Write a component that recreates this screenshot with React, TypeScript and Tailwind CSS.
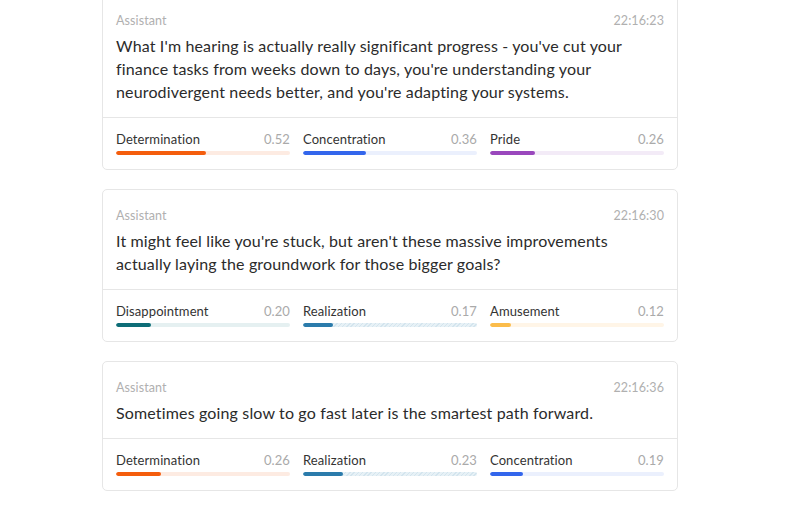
import React from "react";

type Emo = { name: string; score: number; fill: string; track: string; hatch?: boolean };
type Msg = { time: string; text: string; emotions: Emo[] };

const det = { fill: "#f45d0d", track: "#fdebe2" };
const conc = { fill: "#3366ec", track: "#ebf0fd" };
const pride = { fill: "#9a48bd", track: "#f3ebf7" };
const disp = { fill: "#0e6d77", track: "#e5f0f1" };
const real = { fill: "#2b7bab", track: "#e7f1f6", hatch: true };
const amu = { fill: "#fbbc4b", track: "#fff5e7" };

const msgs: Msg[] = [
  {
    time: "22:16:23",
    text: "What I'm hearing is actually really significant progress - you've cut your finance tasks from weeks down to days, you're understanding your neurodivergent needs better, and you're adapting your systems.",
    emotions: [
      { name: "Determination", score: 0.52, ...det },
      { name: "Concentration", score: 0.36, ...conc },
      { name: "Pride", score: 0.26, ...pride },
    ],
  },
  {
    time: "22:16:30",
    text: "It might feel like you're stuck, but aren't these massive improvements actually laying the groundwork for those bigger goals?",
    emotions: [
      { name: "Disappointment", score: 0.2, ...disp },
      { name: "Realization", score: 0.17, ...real },
      { name: "Amusement", score: 0.12, ...amu },
    ],
  },
  {
    time: "22:16:36",
    text: "Sometimes going slow to go fast later is the smartest path forward.",
    emotions: [
      { name: "Determination", score: 0.26, ...det },
      { name: "Realization", score: 0.23, ...real },
      { name: "Concentration", score: 0.19, ...conc },
    ],
  },
];

function Bar({ e }: { e: Emo }) {
  return (
    <div className="flex flex-col">
      <div className="flex items-center justify-between text-[13px] leading-[18px] tracking-[0.1px]">
        <span className="text-[#333]">{e.name}</span>
        <span className="text-[#aaa]">{e.score.toFixed(2)}</span>
      </div>
      <div
        className="mt-[3px] h-[4px] w-full rounded-full overflow-hidden"
        style={{
          backgroundColor: e.track,
          backgroundImage: e.hatch
            ? "repeating-linear-gradient(135deg, rgba(43,123,171,0.1) 0px, rgba(43,123,171,0.1) 1px, transparent 1px, transparent 3px)"
            : undefined,
        }}
      >
        <div className="h-full rounded-full" style={{ width: `${e.score * 100}%`, backgroundColor: e.fill }} />
      </div>
    </div>
  );
}

export default function App() {
  return (
    <div
      className="min-h-[519px] w-[803px] bg-white overflow-hidden"
      style={{ fontFamily: "Lato, 'Noto Sans', sans-serif" }}
    >
      <div className="mt-[-6px] ml-[102px] w-[576px] flex flex-col gap-[19px]">
        {msgs.map((m) => (
          <div key={m.time} className="rounded-[5px] border border-[#e6e6e6] bg-white">
            <div className="px-[13px] pt-4 pb-[14px]">
              <div className="flex items-center justify-between text-[12.5px] leading-5 text-[#b0b0b0] tracking-[0.1px]">
                <span>Assistant</span>
                <span>{m.time}</span>
              </div>
              <p className="mt-[3px] text-[16px] leading-[23px] tracking-[0.15px] text-[#2b2b2b] pr-[22px]">{m.text}</p>
            </div>
            <div className="border-t border-[#e6e6e6] px-[13px] pt-[12px] pb-[14px] grid grid-cols-3 gap-[13px]">
              {m.emotions.map((e) => (
                <Bar key={e.name} e={e} />
              ))}
            </div>
          </div>
        ))}
      </div>
    </div>
  );
}
